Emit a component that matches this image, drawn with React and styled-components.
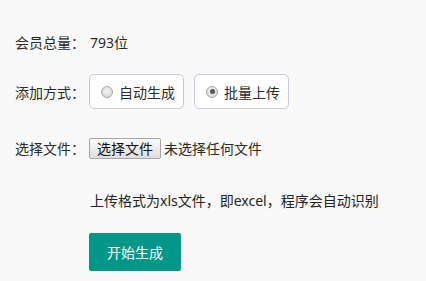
import styled, { createGlobalStyle } from 'styled-components';

const GlobalStyle = createGlobalStyle`
    body {
        margin: 0;
        background: #f9f9f9;
        font-family: "Noto Sans", "Noto Sans CJK SC", sans-serif;
        color: #2b2b2b;
    }
`;

const Page = styled.div`
    display: flex;
    flex-direction: column;
    padding: 22px 0 0 15px;
    font-size: 14px;
`;

const Row = styled.div`
    display: flex;
    align-items: center;
    height: ${props => props.h}px;
    margin-top: ${props => props.mt || 0}px;
`;

const Label = styled.span`
    width: 74px;
    flex-shrink: 0;
    white-space: nowrap;
`;

const Value = styled.span`
    padding-left: 1px;
`;

const Options = styled.div`
    display: flex;
    gap: 10px;
`;

const Option = styled.label`
    display: flex;
    align-items: center;
    box-sizing: border-box;
    width: 95px;
    height: 35px;
    padding-left: 11px;
    border: 1px solid #c9c9d9;
    border-radius: 5px;
    background: #fff;
    gap: 6px;
`;

const Radio = styled.span`
    box-sizing: border-box;
    width: 12px;
    height: 12px;
    border-radius: 50%;
    border: 1px solid #a8a8a8;
    background: radial-gradient(circle at 50% 40%, #f4f4f4, #d0d0d0);
    display: flex;
    align-items: center;
    justify-content: center;
    &::after {
        content: '';
        display: ${props => (props.checked ? 'block' : 'none')};
        width: 5px;
        height: 5px;
        border-radius: 50%;
        background: #555;
    }
`;

const FileButton = styled.span`
    box-sizing: border-box;
    display: inline-flex;
    align-items: center;
    justify-content: center;
    width: 72px;
    height: 21px;
    border: 1px solid #a6a6a6;
    border-radius: 2px;
    background: linear-gradient(#fbfbfb, #dedede);
    color: #111;
    margin-right: 3px;
`;

const Hint = styled.span`
    margin-left: 75px;
    font-size: 14px;
    color: #222;
`;

const Submit = styled.button`
    margin: 13px 0 0 74px;
    width: 92px;
    height: 38px;
    border: none;
    border-radius: 2px;
    background: #009688;
    color: #fff;
    font-family: inherit;
    font-size: 14px;
    cursor: pointer;
`;

export default function App() {
    return (
        <Page>
            <GlobalStyle />
            <Row h={40}>
                <Label>会员总量：</Label>
                <Value>793位</Value>
            </Row>
            <Row h={35} mt={12}>
                <Label>添加方式：</Label>
                <Options>
                    <Option><Radio />自动生成</Option>
                    <Option><Radio checked />批量上传</Option>
                </Options>
            </Row>
            <Row h={40} mt={19}>
                <Label>选择文件：</Label>
                <FileButton>选择文件</FileButton>
                <span>未选择任何文件</span>
            </Row>
            <Row h={40} mt={12}>
                <Hint>上传格式为xls文件，即excel，程序会自动识别</Hint>
            </Row>
            <Submit>开始生成</Submit>
        </Page>
    );
}
